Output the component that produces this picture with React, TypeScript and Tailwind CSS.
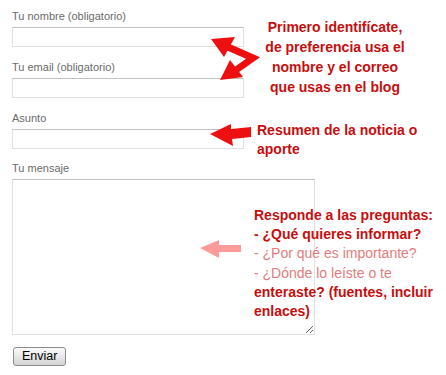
const inputCls =
  "block w-full h-[20px] mt-[3px] bg-white border border-[#e0e0e0] border-t-[#c2c2c2] outline-none";

function Field({ label }: { label: string }) {
  return (
    <div className="mb-[12px]">
      <label className="block text-[11px] leading-[15px] pt-px text-[#6b6b6b]">{label}</label>
      <input type="text" className={inputCls} />
    </div>
  );
}

function Arrows() {
  return (
    <svg className="absolute inset-0 pointer-events-none" width="446" height="375" viewBox="0 0 446 375">
      {/* double arrow: name <-> email */}
      <polyline points="228,47 253,58 236,70" fill="none" stroke="#ee1010" strokeWidth="7" strokeLinejoin="miter" />
      <polygon points="211,39 235,37 224,57" fill="#ee1010" />
      <polygon points="220,80 243,77 230,60" fill="#ee1010" />
      {/* asunto arrow */}
      <polygon points="210,134 231,124 231,129 251,127 251,137 232,139 233,146" fill="#ee1010" />
      {/* mensaje arrow, faded */}
      <polygon points="200,248 219,240 219,245 241,245 241,252 219,252 219,258" fill="#ff9a9a" />
    </svg>
  );
}

export default function App() {
  return (
    <div className="relative w-[446px] h-[375px] bg-white overflow-hidden font-['Liberation_Sans',Arial,sans-serif]">
      <form className="pl-[12px] pt-[8px]" onSubmit={(e) => e.preventDefault()}>
        <div className="flex">
          <div className="w-[232px] shrink-0">
            <Field label="Tu nombre (obligatorio)" />
            <Field label="Tu email (obligatorio)" />
          </div>
          <p className="w-[182px] pt-[9px] text-center text-[14px] font-bold leading-[20px] text-[#c80d0d] whitespace-nowrap">
            Primero identifícate,<br />
            de preferencia usa el<br />
            nombre y el correo<br />
            que usas en el blog
          </p>
        </div>

        <div className="flex">
          <div className="w-[232px] shrink-0">
            <Field label="Asunto" />
          </div>
          <p className="ml-[13px] pt-[11px] text-[14px] font-bold leading-[19px] text-[#c80d0d] whitespace-nowrap">
            Resumen de la noticia o<br />
            aporte
          </p>
        </div>

        <div className="relative">
          <label className="block text-[11px] leading-[15px] text-[#6b6b6b]">Tu mensaje</label>
          <textarea className="block w-[303px] h-[156px] mt-[3px] bg-white border border-[#e0e0e0] border-t-[#c2c2c2] outline-none" />
          <div className="absolute left-[242px] top-[45px] text-[14px] leading-[19.2px] whitespace-nowrap">
            <p className="font-bold text-[#c80d0d]">Responde a las preguntas:</p>
            <p className="font-bold text-[#c80d0d]">- ¿Qué quieres informar?</p>
            <p className="text-[#e47c7c]">- ¿Por qué es importante?</p>
            <p className="text-[#e47c7c]">- ¿Dónde lo leíste o te</p>
            <p className="font-bold text-[#c80d0d]">enteraste? (fuentes, incluir</p>
            <p className="font-bold text-[#c80d0d]">enlaces)</p>
          </div>
          <button
            type="submit"
            className="mt-[12px] ml-px h-[19px] px-[8px] rounded-[3px] border border-[#8c8c8c] bg-linear-to-b from-[#fbfbfb] to-[#d4d4d4] text-[12.5px] leading-none text-black"
          >
            Enviar
          </button>
        </div>
      </form>
      <Arrows />
    </div>
  );
}
